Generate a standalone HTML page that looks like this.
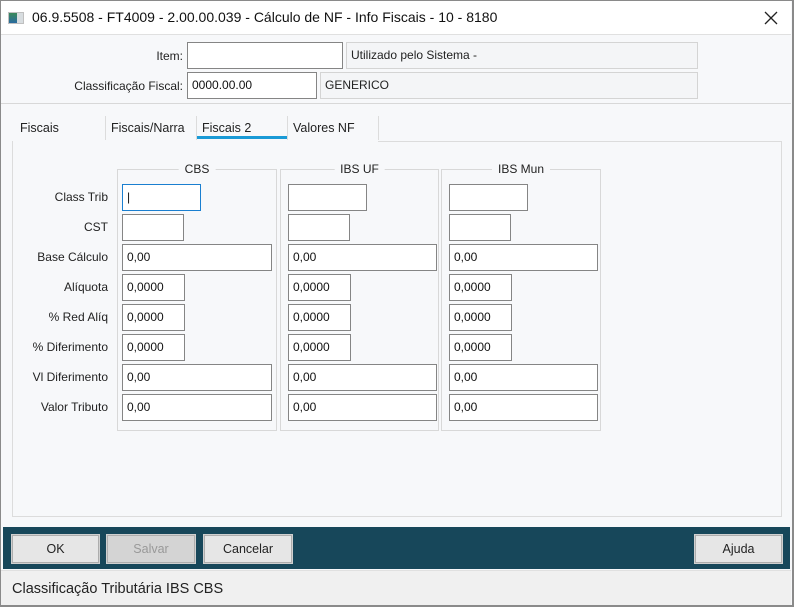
<!DOCTYPE html>
<html><head><meta charset="utf-8"><style>
*{margin:0;padding:0;box-sizing:border-box}
body{width:794px;height:607px;overflow:hidden;background:#f7f8fa;font-family:"Liberation Sans",sans-serif;font-size:12px;color:#222;position:relative}
.a{position:absolute}
.in{position:absolute;background:#fff;border:1px solid #858585;height:27px;padding:0 0 0 4px;line-height:25px;font-size:12px;color:#111}
.ro{position:absolute;background:#f4f5f7;border:1px solid #d4d4d4;height:27px;padding-left:4px;line-height:25px}
.lb{position:absolute;text-align:right;width:100px;left:8px;line-height:27px}
.gb{position:absolute;border:1px solid #d8d8d8;top:169px;height:262px}
.gt{position:absolute;top:-8px;background:#f7f8fa;padding:0 6px;left:50%;transform:translateX(-50%)}
.sep{position:absolute;top:116px;width:1px;height:24px;background:#dcdcdc}
.tab{position:absolute;top:121px;font-size:12.5px}
.btn{position:absolute;top:535px;height:28px;background:#e6e6e6;border:1px solid #adadad;outline:1px solid #d0d0d0;text-align:center;line-height:26px;font-size:12.5px}
</style></head><body>
<div class="a" style="left:0;top:0;width:794px;height:607px;border:1px solid #8a8a8a;border-right:2px solid #8a8a8a;border-bottom:2px solid #8a8a8a"></div>
<div class="a" style="left:1px;top:1px;width:790px;height:34px;background:#fff;border-bottom:1px solid #e0e0e0"></div>
<div class="a" style="left:8px;top:12px;width:16px;height:12px;background:#d8dde0;border:1px solid #c0c0c0"><div style="width:8px;height:10px;background:linear-gradient(#3a8a5a,#2a6aa0)"></div></div>
<div class="a" style="left:32px;top:9px;font-size:14px;color:#111">06.9.5508 - FT4009 - 2.00.00.039 - Cálculo de NF - Info Fiscais - 10 - 8180</div>
<svg class="a" style="left:764px;top:11px" width="14" height="14" viewBox="0 0 14 14"><path d="M1 1L13 13M13 1L1 13" stroke="#222" stroke-width="1.3"/></svg>
<div class="a" style="left:1px;top:103px;width:790px;height:1px;background:#d8d8d8"></div>

<div class="a" style="left:140px;top:49px;width:43px;text-align:right">Item:</div>
<div class="in" style="left:187px;top:42px;width:156px"></div>
<div class="ro" style="left:346px;top:42px;width:352px">Utilizado pelo Sistema -</div>
<div class="a" style="left:40px;top:79px;width:143px;text-align:right">Classificação Fiscal:</div>
<div class="in" style="left:187px;top:72px;width:130px">0000.00.00</div>
<div class="ro" style="left:320px;top:72px;width:378px">GENERICO</div>

<div class="tab" style="left:20px">Fiscais</div>
<div class="sep" style="left:105px"></div>
<div class="tab" style="left:111px">Fiscais/Narra</div>
<div class="sep" style="left:196px"></div>
<div class="tab" style="left:202px">Fiscais 2</div>
<div class="a" style="left:197px;top:136px;width:90px;height:3px;background:#1a9ad6"></div>
<div class="sep" style="left:287px"></div>
<div class="tab" style="left:293px">Valores NF</div>
<div class="sep" style="left:378px"></div>
<div class="a" style="left:12px;top:141px;width:770px;height:376px;border:1px solid #dcdcdc;border-top:none"></div>
<div class="a" style="left:378px;top:141px;width:404px;height:1px;background:#dcdcdc"></div>

<div class="gb" style="left:117px;width:160px"><span class="gt">CBS</span></div>
<div class="gb" style="left:280px;width:159px"><span class="gt">IBS UF</span></div>
<div class="gb" style="left:441px;width:160px"><span class="gt">IBS Mun</span></div>

<div class="lb" style="top:184px">Class Trib</div>
<div class="lb" style="top:214px">CST</div>
<div class="lb" style="top:244px">Base Cálculo</div>
<div class="lb" style="top:274px">Alíquota</div>
<div class="lb" style="top:304px">% Red Alíq</div>
<div class="lb" style="top:334px">% Diferimento</div>
<div class="lb" style="top:364px">Vl Diferimento</div>
<div class="lb" style="top:394px">Valor Tributo</div>

<div class="in" style="left:122px;top:184px;width:79px;border-color:#1a7fd0">|</div>
<div class="in" style="left:122px;top:214px;width:62px"></div>
<div class="in" style="left:122px;top:244px;width:150px">0,00</div>
<div class="in" style="left:122px;top:274px;width:63px">0,0000</div>
<div class="in" style="left:122px;top:304px;width:63px">0,0000</div>
<div class="in" style="left:122px;top:334px;width:63px">0,0000</div>
<div class="in" style="left:122px;top:364px;width:150px">0,00</div>
<div class="in" style="left:122px;top:394px;width:150px">0,00</div>

<div class="in" style="left:288px;top:184px;width:79px"></div>
<div class="in" style="left:288px;top:214px;width:62px"></div>
<div class="in" style="left:288px;top:244px;width:149px">0,00</div>
<div class="in" style="left:288px;top:274px;width:63px">0,0000</div>
<div class="in" style="left:288px;top:304px;width:63px">0,0000</div>
<div class="in" style="left:288px;top:334px;width:63px">0,0000</div>
<div class="in" style="left:288px;top:364px;width:149px">0,00</div>
<div class="in" style="left:288px;top:394px;width:149px">0,00</div>

<div class="in" style="left:449px;top:184px;width:79px"></div>
<div class="in" style="left:449px;top:214px;width:62px"></div>
<div class="in" style="left:449px;top:244px;width:149px">0,00</div>
<div class="in" style="left:449px;top:274px;width:63px">0,0000</div>
<div class="in" style="left:449px;top:304px;width:63px">0,0000</div>
<div class="in" style="left:449px;top:334px;width:63px">0,0000</div>
<div class="in" style="left:449px;top:364px;width:149px">0,00</div>
<div class="in" style="left:449px;top:394px;width:149px">0,00</div>

<div class="a" style="left:3px;top:527px;width:787px;height:42px;background:#17475a"></div>
<div class="btn" style="left:12px;width:87px">OK</div>
<div class="btn" style="left:107px;width:88px;background:#d4d4d4;color:#999">Salvar</div>
<div class="btn" style="left:204px;width:88px">Cancelar</div>
<div class="btn" style="left:695px;width:87px">Ajuda</div>

<div class="a" style="left:1px;top:570px;width:790px;height:35px;background:#f0f0f0;border-top:1px solid #e0e0e0"></div>
<div class="a" style="left:12px;top:581px;font-size:14.5px;color:#222">Classificação Tributária IBS CBS</div>
</body></html>
